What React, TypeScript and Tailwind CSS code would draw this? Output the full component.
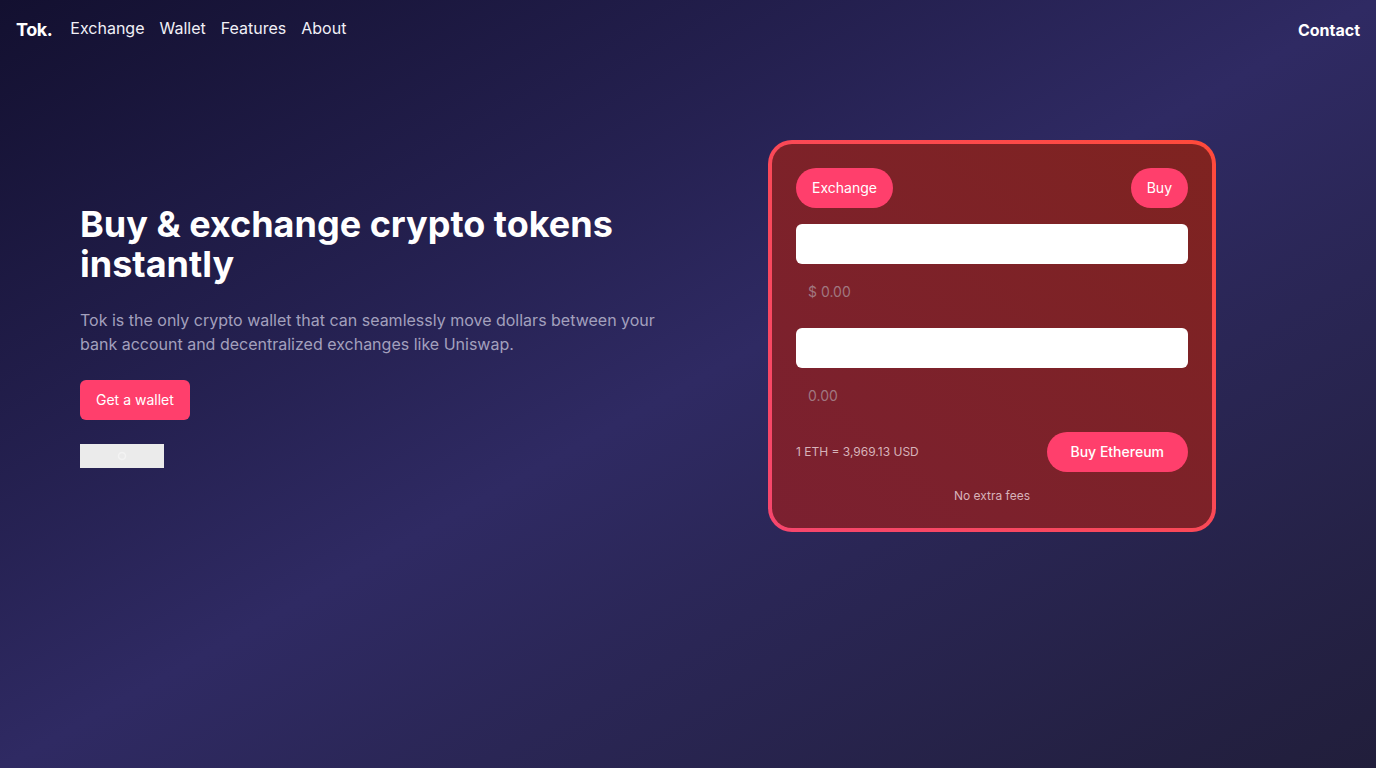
import { useState } from "react";

function Nav() {
    return (
        <header className="flex items-start justify-between px-4 py-4 text-white">
            <div className="flex items-start gap-[18px]">
                <a href="#" className="text-lg font-bold leading-7 tracking-tight">Tok.</a>
                <nav className="flex gap-[15px] text-base leading-6 text-[#f1f0f7]">
                    <a href="#">Exchange</a>
                    <a href="#">Wallet</a>
                    <a href="#">Features</a>
                    <a href="#">About</a>
                </nav>
            </div>
            <a href="#" className="mt-0.5 text-base font-bold leading-6">Contact</a>
        </header>
    );
}

function SwapCard() {
    const [tab, setTab] = useState("exchange");
    const [usd, setUsd] = useState("");
    const [eth, setEth] = useState("");

    return (
        <div className="w-[448px] rounded-3xl bg-linear-to-tr from-[#f6466d] to-[#ff4a3a] p-1">
            <div className="flex flex-col rounded-[20px] bg-linear-to-tr from-[#7b2030] to-[#7f2320] p-6">
                <div className="flex items-center justify-between">
                    <button
                        onClick={() => setTab("exchange")}
                        className={`h-10 rounded-full px-4 text-sm text-white ${tab === "exchange" ? "bg-[#ff3f6c]" : "bg-[#ff3f6c]"}`}
                    >
                        Exchange
                    </button>
                    <button onClick={() => setTab("buy")} className="h-10 rounded-full bg-[#ff3f6c] px-4 text-sm text-white">
                        Buy
                    </button>
                </div>

                <input
                    value={usd}
                    onChange={e => setUsd(e.target.value)}
                    className="mt-4 h-10 w-full rounded-md bg-white px-3 text-gray-900 outline-none"
                />
                <p className="mt-4 px-3 text-sm leading-6 text-[#a07780]">$ {usd || "0.00"}</p>

                <input
                    value={eth}
                    onChange={e => setEth(e.target.value)}
                    className="mt-6 h-10 w-full rounded-md bg-white px-3 text-gray-900 outline-none"
                />
                <p className="mt-4 px-3 text-sm leading-6 text-[#a07780]">{eth || "0.00"}</p>

                <div className="mt-6 flex items-center justify-between">
                    <span className="text-xs text-[#d7b3ba]">1 ETH = 3,969.13 USD</span>
                    <button className="h-10 rounded-full bg-[#ff3f6c] px-6 text-sm font-medium text-white">
                        Buy Ethereum
                    </button>
                </div>

                <p className="mt-4 text-center text-xs leading-4 text-[#d7b3ba]">No extra fees</p>
            </div>
        </div>
    );
}

export default function App() {
    return (
        <div className="min-h-screen bg-linear-to-br from-[#131030] via-[#2f2a63] to-[#211e3b] font-['Inter',sans-serif]">
            <Nav />

            <main className="grid grid-cols-2 items-center px-20 pt-20">
                <div className="flex flex-col items-start">
                    <h1 className="text-4xl font-bold leading-10 text-white">
                        Buy &amp; exchange crypto tokens instantly
                    </h1>
                    <p className="mt-6 text-base leading-6 text-[#a3a0bd]">
                        Tok is the only crypto wallet that can seamlessly move dollars between your bank account and decentralized exchanges like Uniswap.
                    </p>
                    <a href="#" className="mt-6 flex h-10 items-center rounded-md bg-[#ff3f6c] px-4 text-sm text-white">
                        Get a wallet
                    </a>
                    <div className="mt-6 flex h-6 w-[84px] items-center justify-center bg-[#ebebeb]">
                        <svg width="12" height="12" viewBox="0 0 12 12" fill="none">
                            <circle cx="6" cy="6" r="3.5" stroke="#f3f3f3" strokeWidth="1.5" />
                        </svg>
                    </div>
                </div>

                <div className="flex justify-center">
                    <SwapCard />
                </div>
            </main>
        </div>
    );
}
